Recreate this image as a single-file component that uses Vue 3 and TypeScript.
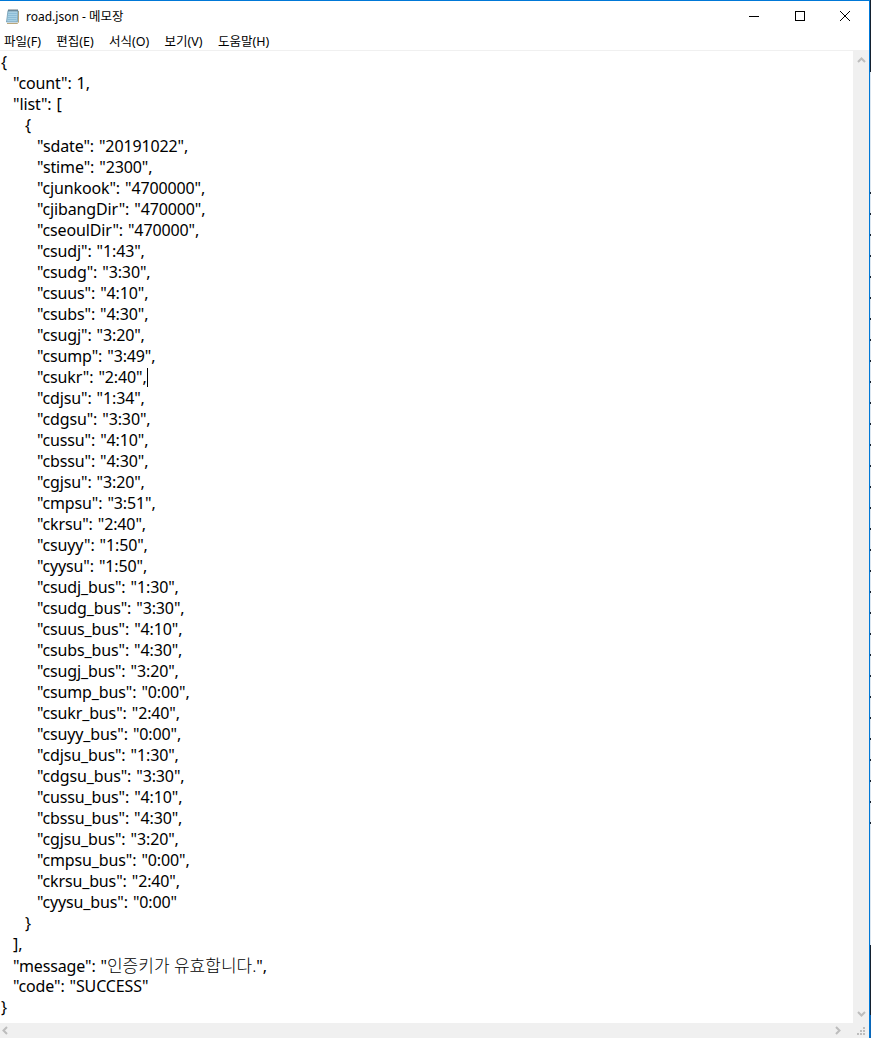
<script setup lang="ts">
interface Line { level: number; text: string; korean?: string; tail?: string }
const pairs: [string, string][] = [
  ['sdate', '20191022'], ['stime', '2300'], ['cjunkook', '4700000'], ['cjibangDir', '470000'],
  ['cseoulDir', '470000'], ['csudj', '1:43'], ['csudg', '3:30'], ['csuus', '4:10'], ['csubs', '4:30'],
  ['csugj', '3:20'], ['csump', '3:49'], ['csukr', '2:40'], ['cdjsu', '1:34'], ['cdgsu', '3:30'],
  ['cussu', '4:10'], ['cbssu', '4:30'], ['cgjsu', '3:20'], ['cmpsu', '3:51'], ['ckrsu', '2:40'],
  ['csuyy', '1:50'], ['cyysu', '1:50'], ['csudj_bus', '1:30'], ['csudg_bus', '3:30'], ['csuus_bus', '4:10'],
  ['csubs_bus', '4:30'], ['csugj_bus', '3:20'], ['csump_bus', '0:00'], ['csukr_bus', '2:40'],
  ['csuyy_bus', '0:00'], ['cdjsu_bus', '1:30'], ['cdgsu_bus', '3:30'], ['cussu_bus', '4:10'],
  ['cbssu_bus', '4:30'], ['cgjsu_bus', '3:20'], ['cmpsu_bus', '0:00'], ['ckrsu_bus', '2:40'], ['cyysu_bus', '0:00'],
]
const lines: Line[] = [
  { level: 0, text: '{' },
  { level: 1, text: '"count": 1,' },
  { level: 1, text: '"list": [' },
  { level: 2, text: '{' },
  ...pairs.map(([k, v], i) => ({ level: 3, text: `"${k}": "${v}"${i < pairs.length - 1 ? ',' : ''}` })),
  { level: 2, text: '}' },
  { level: 1, text: '],' },
  { level: 1, text: '"message": "', korean: '인증키가 유효합니다.', tail: '",' },
  { level: 1, text: '"code": "SUCCESS"' },
  { level: 0, text: '}' },
]
const menus = ['파일(F)', '편집(E)', '서식(O)', '보기(V)', '도움말(H)']
const caretLine = '"csukr": "2:40",'
</script>

<template>
  <div class="desktop">
    <div class="window">
      <header class="titlebar">
        <svg class="app-icon" width="16" height="16" viewBox="0 0 16 16">
          <path d="M2 15.5h10.5l1-1.5V3" fill="none" stroke="#b9a77c" />
          <path d="M3 2.5h10l-.7 11.5H1.5z" fill="#a8d0e4" stroke="#5f8ea8" stroke-width=".7" />
          <path d="M3.2 5.5h8.6M3 7.5h8.7M2.9 9.5h8.7M2.7 11.5h8.7" stroke="#7fb4d0" stroke-width=".7" />
          <path d="M4 1v2.5M6 1v2.5M8 1v2.5M10 1v2.5M12 1v2.5" stroke="#4a5a66" stroke-width=".8" />
        </svg>
        <span class="title">road.json - <span class="title-ko">메모장</span></span>
        <div class="controls">
          <button class="ctl"><svg width="10" height="10" viewBox="0 0 10 10"><path d="M0 5.5h10" stroke="#000" /></svg></button>
          <button class="ctl"><svg width="10" height="10" viewBox="0 0 10 10"><rect x=".5" y=".5" width="9" height="9" fill="none" stroke="#000" /></svg></button>
          <button class="ctl"><svg width="10" height="10" viewBox="0 0 10 10"><path d="M0 0l10 10M10 0L0 10" stroke="#000" /></svg></button>
        </div>
      </header>
      <nav class="menu">
        <span v-for="m in menus" :key="m" class="menu-item">{{ m }}</span>
      </nav>
      <main class="editor">
        <div class="text">
          <div v-for="(l, i) in lines" :key="i" class="line" :class="`lv${l.level}`">{{ l.text }}<span v-if="l.korean" class="ko">{{ l.korean }}</span><template v-if="l.tail">{{ l.tail }}</template><span v-if="l.text === caretLine" class="caret"></span></div>
        </div>
        <aside class="vbar">
          <svg width="9" height="6" viewBox="0 0 9 6"><path d="M1 5l3.5-3.5L8 5" fill="none" stroke="#bdbdbd" stroke-width="2" /></svg>
          <svg width="9" height="6" viewBox="0 0 9 6"><path d="M1 1l3.5 3.5L8 1" fill="none" stroke="#bdbdbd" stroke-width="2" /></svg>
        </aside>
      </main>
      <footer class="hbar">
        <svg width="6" height="9" viewBox="0 0 6 9"><path d="M5 1L1.5 4.5 5 8" fill="none" stroke="#bdbdbd" stroke-width="2" /></svg>
        <svg class="right" width="6" height="9" viewBox="0 0 6 9"><path d="M1 1l3.5 3.5L1 8" fill="none" stroke="#bdbdbd" stroke-width="2" /></svg>
        <svg class="grip" width="10" height="10" viewBox="0 0 10 10" fill="#bdbdbd"><rect x="7" y="1" width="2" height="2" /><rect x="4" y="4" width="2" height="2" /><rect x="7" y="4" width="2" height="2" /><rect x="1" y="7" width="2" height="2" /><rect x="4" y="7" width="2" height="2" /><rect x="7" y="7" width="2" height="2" /></svg>
      </footer>
    </div>
  </div>
</template>

<style scoped>
.desktop {
  width: 871px;
  height: 1038px;
  background:
    repeating-linear-gradient(transparent 0 19px, #14202e 19px 21px) 0 173px / 100% 667px no-repeat,
    linear-gradient(#14202e 0 72px, #dbe6f0 72px 945px, #14202e 945px 1015px, #0a66b8 1015px);
}
.window {
  width: 870px;
  height: 1038px;
  box-sizing: border-box;
  display: flex;
  flex-direction: column;
  background: #fff;
  border-top: 1px solid #0078d7;
  border-right: 1px solid #0078d7;
  font-family: "Noto Sans", "Noto Sans CJK KR", sans-serif;
  color: #000;
  overflow: hidden;
}
.titlebar {
  height: 29px;
  display: flex;
  align-items: center;
  padding-left: 5px;
  flex: none;
}
.app-icon { flex: none; }
.title { margin-left: 5px; font-size: 12px; }
.title-ko { font-size: 12.5px; }
.controls { margin-left: auto; display: flex; padding-right: 1px; }
.ctl {
  width: 45.5px;
  height: 29px;
  border: 0;
  padding: 0;
  background: none;
  display: flex;
  align-items: center;
  justify-content: center;
}
.menu {
  height: 20px;
  display: flex;
  align-items: center;
  gap: 15.3px;
  padding-left: 4px;
  font-size: 12.5px;
  flex: none;
}
.editor {
  flex: 1;
  display: flex;
  min-height: 0;
  border-top: 1px solid #f0f0f0;
}
.text { flex: 1; font-size: 16px; letter-spacing: -0.13px; word-spacing: 1px; padding-top: 1px; }
.ko { font-size: 17px; font-weight: 300; letter-spacing: 0; word-spacing: 0; }
.line { height: 21px; line-height: 21px; white-space: pre; }
.lv0 { padding-left: 1px; }
.lv1 { padding-left: 13px; }
.lv2 { padding-left: 25px; }
.lv3 { padding-left: 37px; }
.caret {
  display: inline-block;
  width: 1px;
  height: 19px;
  background: #000;
  vertical-align: -4px;
}
.vbar {
  width: 16px;
  flex: none;
  background: #f0f0f0;
  display: flex;
  flex-direction: column;
  justify-content: space-between;
  align-items: center;
  padding: 6px 0;
  box-sizing: border-box;
}
.hbar {
  height: 15px;
  flex: none;
  background: #f0f0f0;
  display: flex;
  align-items: center;
  padding-left: 2px;
}
.hbar .right { margin-left: auto; margin-right: 15px; }
.hbar .grip { margin-right: 3px; }
</style>
